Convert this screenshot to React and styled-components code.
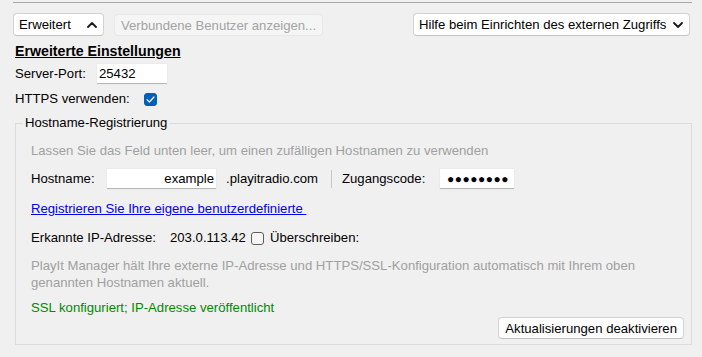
import React from "react";
import styled, { createGlobalStyle } from "styled-components";

const Global = createGlobalStyle`
  html, body { margin: 0; padding: 0; background: #f0f0f0; }
  body { font-family: "Liberation Sans", Arial, sans-serif; font-size: 13.15px; color: #000; }
  * { box-sizing: border-box; }
`;

const Page = styled.div`
  width: 702px;
  height: 357px;
  overflow: hidden;
  display: flex;
  flex-direction: column;
`;

const TopRule = styled.div`
  height: 1px;
  background: #a8a8a8;
  margin: 2px 10px 0 13px;
`;

const Toolbar = styled.div`
  display: flex;
  align-items: center;
  height: 23px;
  margin: 10px 12px 0 13px;
  gap: 10px;
`;

const Spacer = styled.div`
  flex: 1;
`;

const DropButton = styled.button`
  font: inherit;
  color: #000;
  width: ${(p) => p.$w}px;
  height: 23px;
  background: #fff;
  border: 1px solid #d2d2d2;
  border-bottom-color: #c4c4c4;
  border-radius: 4px;
  padding: 0 6px 0 5px;
  display: flex;
  align-items: center;
  justify-content: space-between;
  white-space: nowrap;
`;

const DisabledButton = styled.button`
  font: inherit;
  color: #a3a3a3;
  width: 209px;
  height: 22px;
  margin-top: 1px;
  background: #f5f5f5;
  border: 1px solid #e8e8e8;
  border-radius: 4px;
  padding: 0 6px;
  text-align: left;
  white-space: nowrap;
`;

const Chevron = ({ up }) => (
  <svg width="10" height="6" viewBox="0 0 10 6">
    <polyline
      points={up ? "1,5 5,1 9,5" : "1,1 5,5 9,1"}
      fill="none"
      stroke="#1a1a1a"
      strokeWidth="1.8"
      strokeLinecap="round"
      strokeLinejoin="round"
    />
  </svg>
);

const Heading = styled.div`
  font-size: 14.2px;
  font-weight: bold;
  text-decoration: underline;
  line-height: 16px;
  margin: 7px 0 0 15px;
`;

const Row = styled.div`
  display: flex;
  align-items: center;
  height: ${(p) => p.$h || 16}px;
  margin-top: ${(p) => p.$mt || 0}px;
  margin-left: ${(p) => p.$ml || 0}px;
  white-space: nowrap;
`;

const Label = styled.span`
  display: inline-block;
  width: ${(p) => (p.$w ? `${p.$w}px` : "auto")};
  padding-left: ${(p) => p.$pl || 0}px;
  flex-shrink: 0;
  line-height: 16px;
`;

const TextBox = styled.div`
  width: ${(p) => p.$w}px;
  height: 20px;
  background: #fff;
  border-bottom: 1px solid #b8b8b8;
  box-shadow: 0 0 0 0.5px #e6e6e6;
  display: flex;
  align-items: center;
  justify-content: ${(p) => (p.$right ? "flex-end" : "flex-start")};
  padding: 0 2px;
  line-height: 16px;
  flex-shrink: 0;
`;

const Dots = styled.span`
  font-size: 12px;
  letter-spacing: 0.5px;
  padding-left: 5px;
  width: 100%;
`;

const CheckBox = styled.span`
  width: 13px;
  height: 13px;
  border-radius: 3px;
  flex-shrink: 0;
  display: inline-flex;
  align-items: center;
  justify-content: center;
  background: ${(p) => (p.$checked ? "#005fb8" : "#f7f7f7")};
  border: 1px solid ${(p) => (p.$checked ? "#005fb8" : "#5f5f5f")};
  margin-right: ${(p) => p.$mr || 0}px;
`;

const Group = styled.fieldset`
  margin: 8px 10px 0 15px;
  padding: 0 7px 5px 15px;
  border: 1px solid #dcdcdc;
  min-width: 0;
`;

const Legend = styled.legend`
  padding: 0 2px;
  margin-left: -8px;
  line-height: 16px;
`;

const Hint = styled.div`
  color: #a0a0a0;
  line-height: ${(p) => p.$lh || 16}px;
  margin-top: ${(p) => p.$mt || 0}px;
  white-space: nowrap;
`;

const Separator = styled.span`
  width: 1px;
  height: 18px;
  background: #c8c8c8;
  margin-right: 10px;
  flex-shrink: 0;
`;

const Link = styled.a`
  display: block;
  color: #0000ee;
  text-decoration: underline;
  line-height: 16px;
  margin-top: 12px;
  width: fit-content;
  cursor: pointer;
`;

const Status = styled.div`
  color: #008a00;
  line-height: 16px;
  margin-top: 9px;
`;

const ButtonRow = styled.div`
  display: flex;
  justify-content: flex-end;
  margin-top: 1px;
`;

const PlainButton = styled.button`
  font: inherit;
  color: #000;
  height: 22px;
  padding: 0 6px;
  background: #fdfdfd;
  border: 1px solid #d2d2d2;
  border-bottom-color: #c0c0c0;
  border-radius: 4px;
  white-space: nowrap;
`;

const Check = () => (
  <svg width="9" height="7" viewBox="0 0 9 7">
    <polyline
      points="1,3.6 3.4,6 8,1"
      fill="none"
      stroke="#fff"
      strokeWidth="1.2"
      strokeLinecap="round"
      strokeLinejoin="round"
    />
  </svg>
);

export default function App() {
  return (
    <Page>
      <Global />
      <TopRule />
      <Toolbar>
        <DropButton $w={91}>
          <span>Erweitert</span>
          <Chevron up />
        </DropButton>
        <DisabledButton disabled>Verbundene Benutzer anzeigen...</DisabledButton>
        <Spacer />
        <DropButton $w={277}>
          <span>Hilfe beim Einrichten des externen Zugriffs</span>
          <Chevron />
        </DropButton>
      </Toolbar>

      <Heading>Erweiterte Einstellungen</Heading>

      <Row $h={20} $mt={5} $ml={15}>
        <Label $w={82}>Server-Port:</Label>
        <TextBox $w={70}>25432</TextBox>
      </Row>

      <Row $mt={7} $ml={15}>
        <Label $w={129}>HTTPS verwenden:</Label>
        <CheckBox $checked>
          <Check />
        </CheckBox>
      </Row>

      <Group>
        <Legend>Hostname-Registrierung</Legend>
        <Hint $mt={12}>Lassen Sie das Feld unten leer, um einen zufälligen Hostnamen zu verwenden</Hint>

        <Row $h={20} $mt={10}>
          <Label $w={76}>Hostname:</Label>
          <TextBox $w={109} $right>example</TextBox>
          <Label $w={115} $pl={10}>.playitradio.com</Label>
          <Separator />
          <Label $w={98}>Zugangscode:</Label>
          <TextBox $w={74}>
            <Dots>●●●●●●●●</Dots>
          </TextBox>
        </Row>

        <Link>Registrieren Sie Ihre eigene benutzerdefinierte&nbsp;</Link>

        <Row $mt={13}>
          <Label $w={139}>Erkannte IP-Adresse:</Label>
          <Label $w={81}>203.0.113.42</Label>
          <CheckBox $mr={6} />
          <Label>Überschreiben:</Label>
        </Row>

        <Hint $lh={17} $mt={11}>
          PlayIt Manager hält Ihre externe IP-Adresse und HTTPS/SSL-Konfiguration automatisch mit Ihrem oben
          <br />
          genannten Hostnamen aktuell.
        </Hint>

        <Status>SSL konfiguriert; IP-Adresse veröffentlicht</Status>

        <ButtonRow>
          <PlainButton>Aktualisierungen deaktivieren</PlainButton>
        </ButtonRow>
      </Group>
    </Page>
  );
}
